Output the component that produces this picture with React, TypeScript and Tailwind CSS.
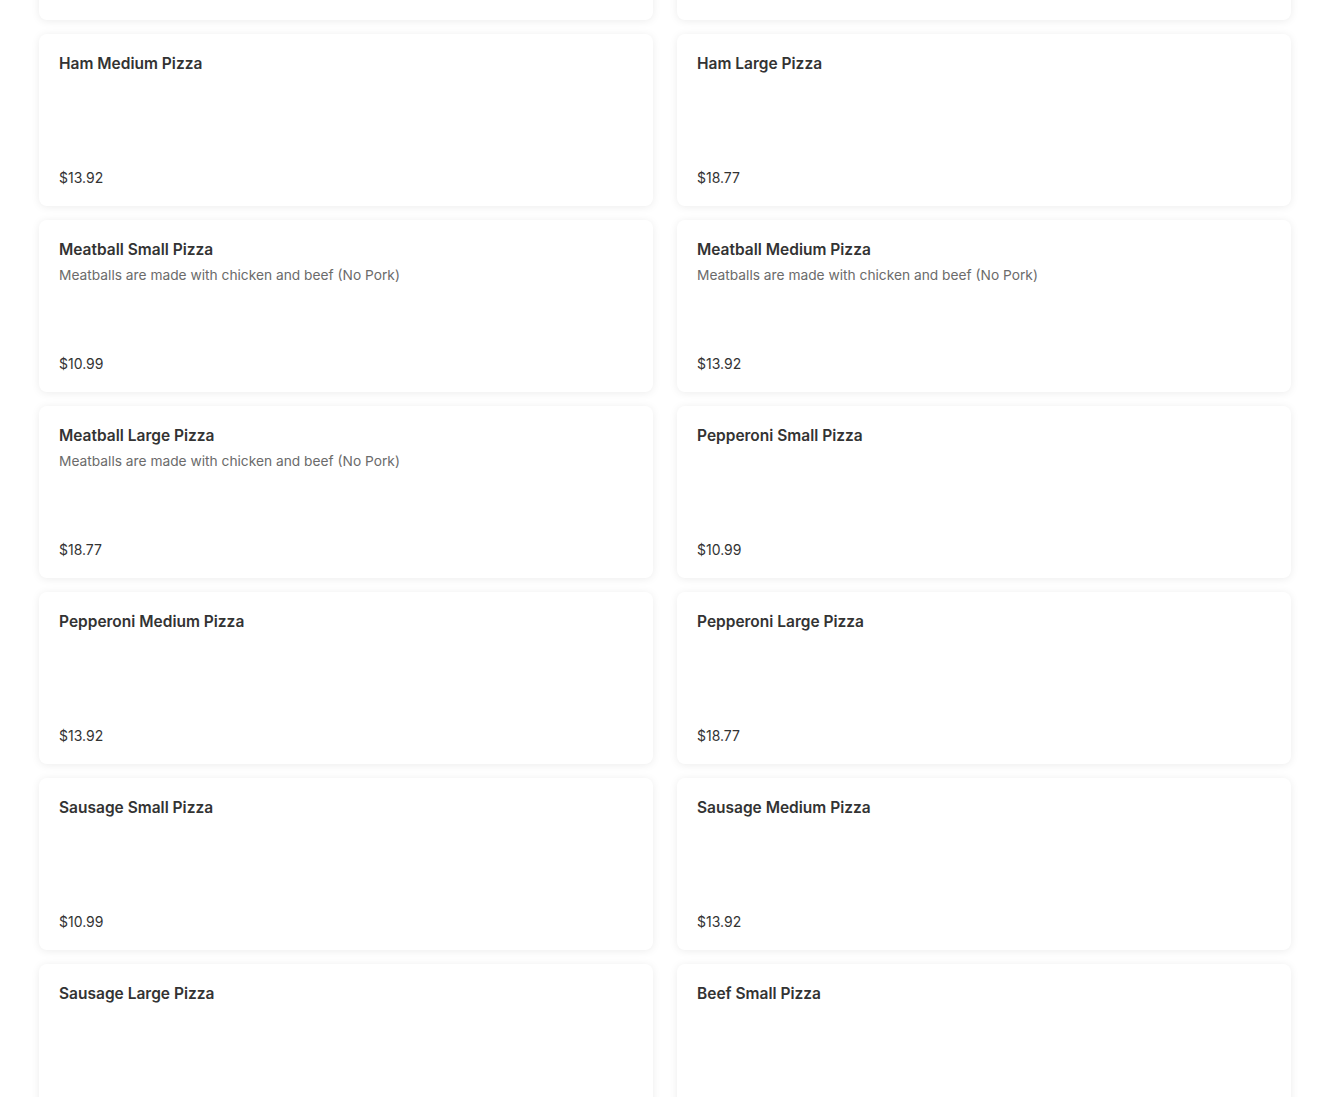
type Item = { name: string; desc?: string; price: string };

const MEATBALL = 'Meatballs are made with chicken and beef (No Pork)';

const items: Item[] = [
  { name: 'Ham Medium Pizza', price: '$13.92' },
  { name: 'Ham Large Pizza', price: '$18.77' },
  { name: 'Meatball Small Pizza', desc: MEATBALL, price: '$10.99' },
  { name: 'Meatball Medium Pizza', desc: MEATBALL, price: '$13.92' },
  { name: 'Meatball Large Pizza', desc: MEATBALL, price: '$18.77' },
  { name: 'Pepperoni Small Pizza', price: '$10.99' },
  { name: 'Pepperoni Medium Pizza', price: '$13.92' },
  { name: 'Pepperoni Large Pizza', price: '$18.77' },
  { name: 'Sausage Small Pizza', price: '$10.99' },
  { name: 'Sausage Medium Pizza', price: '$13.92' },
  { name: 'Sausage Large Pizza', price: '$18.77' },
  { name: 'Beef Small Pizza', price: '$10.99' },
];

const cardCls = 'h-[172px] rounded-lg bg-white shadow-[0_1px_8px_rgba(0,0,0,0.08)]';

function MenuCard({ item }: { item: Item }) {
  return (
    <div className={`${cardCls} flex flex-col justify-between px-5 pt-[20px] pb-[18px]`}>
      <div>
        <div className="text-[15.5px] leading-[20px] font-semibold text-[#333333]">{item.name}</div>
        {item.desc && (
          <div className="mt-[5px] text-[13.75px] leading-[20px] text-[#6b6b6b]">{item.desc}</div>
        )}
      </div>
      <div className="text-[14px] leading-[20px] text-[#333333]">{item.price}</div>
    </div>
  );
}

export default function App() {
  return (
    <div className="min-h-screen overflow-hidden bg-white font-['Inter',sans-serif]">
      <div className="-mt-[152px] grid grid-cols-2 gap-x-6 gap-y-[14px] px-[39px]">
        {/* previous row, scrolled out of view */}
        <div className={cardCls} />
        <div className={cardCls} />
        {items.map((it) => (
          <MenuCard key={it.name} item={it} />
        ))}
      </div>
    </div>
  );
}
